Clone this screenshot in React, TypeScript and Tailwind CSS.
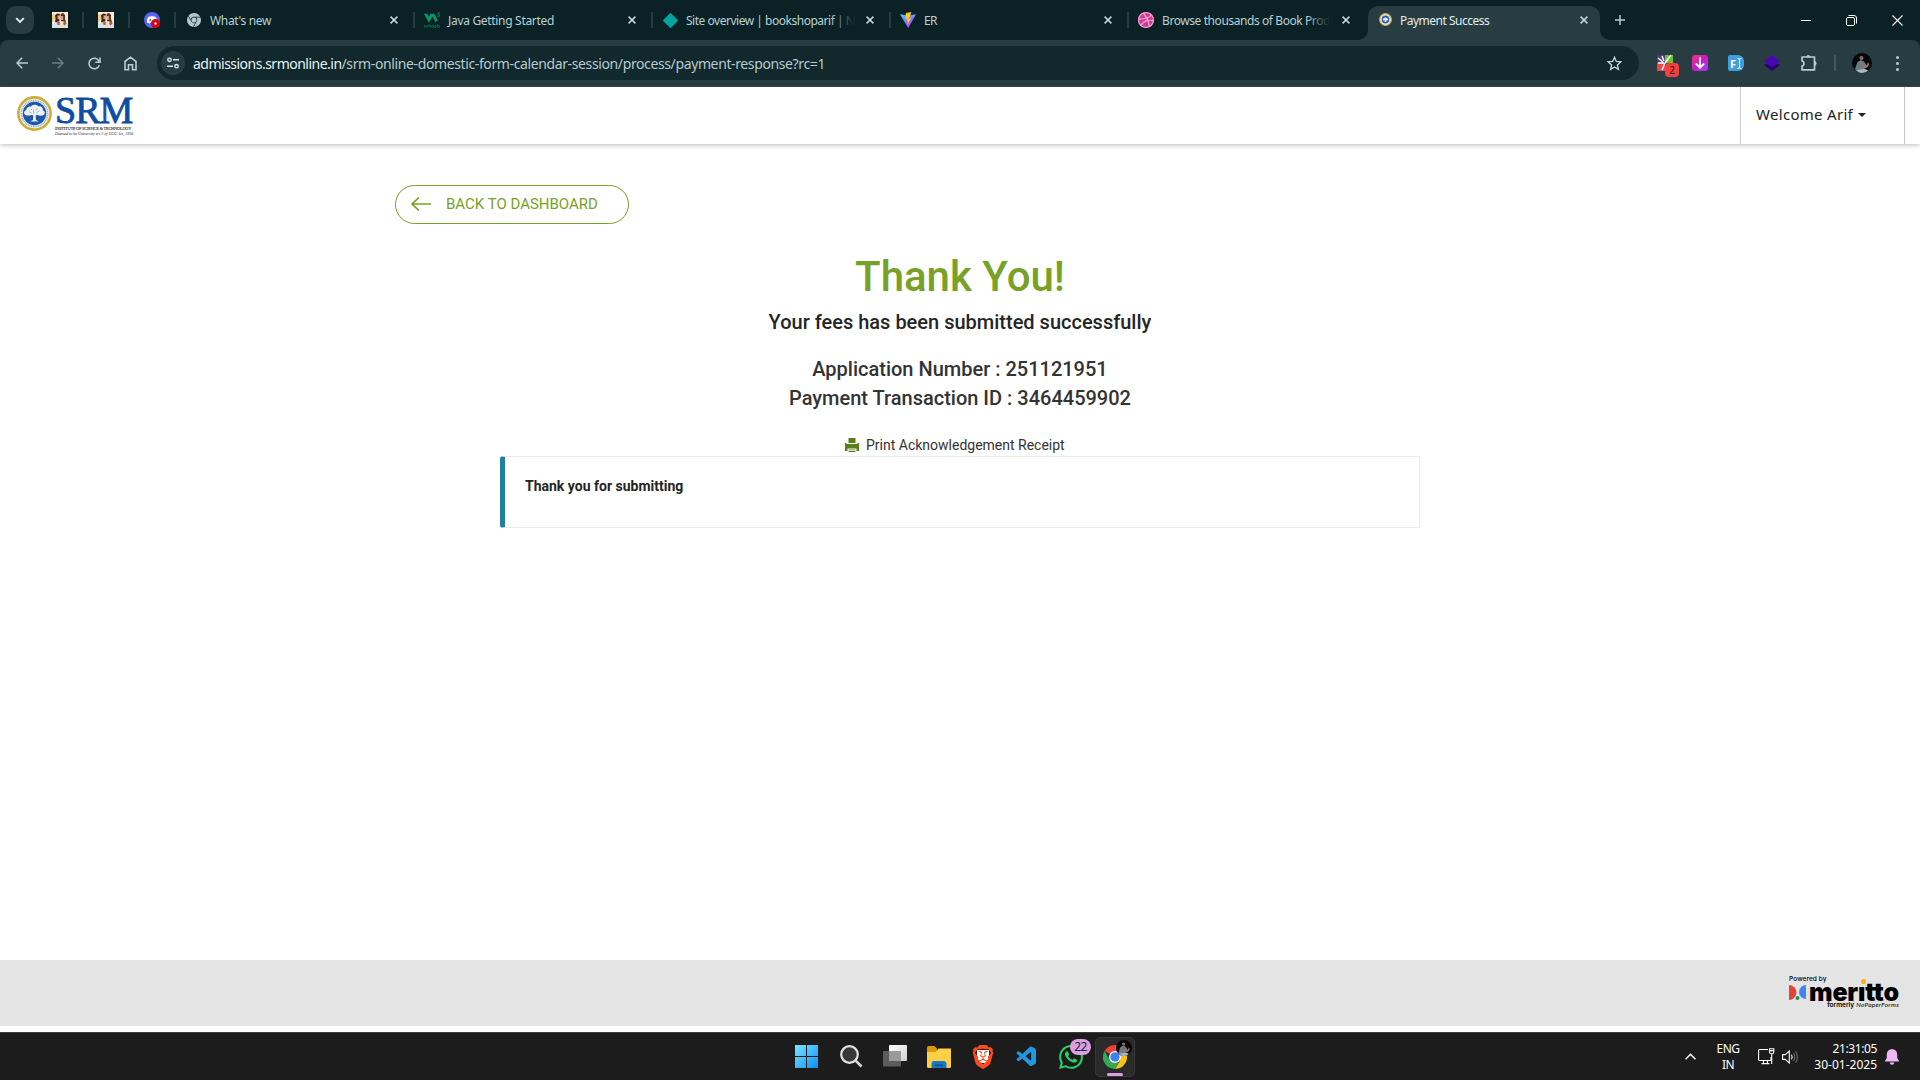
import { type ReactNode } from "react";
import { SiGooglechrome, SiW3Schools, SiDribbble, SiBrave, SiWhatsapp } from "react-icons/si";
import { VscVscode } from "react-icons/vsc";

function BookFavicon() {
  return (
    <svg width="16" height="16" viewBox="0 0 16 16">
      <rect width="16" height="16" fill="#f6ead8" />
      <path d="M0 3l3-1v5l-2 3-1 0z" fill="#f0c98e" />
      <path d="M3 3.500 5 1.500l3 .5-1 3 .5 4-2 1-1 2-1.500-2 .5-3z" fill="#4a2416" />
      <path d="M8.500 2l2.500-1 2 2v4l1 3-2.500 1L9 9z" fill="#59301f" />
      <path d="M5.500 3.500h2v3.500h-2z" fill="#dba17b" />
      <path d="M9 4h2.200v4H9z" fill="#d59a78" />
      <path d="M0 12l4-2 3 2v4H0z" fill="#d3e4ec" />
      <path d="M7 11l3-2 3 1 3 3v3H7z" fill="#efdccd" />
      <path d="M5 9l3 1-.5 3-2 0z" fill="#b8603b" />
      <path d="M11 11l3-2 .5 3-2.500 1.500z" fill="#8a6a5a" />
    </svg>
  );
}

function DiscordFavicon() {
  return (
    <svg width="16" height="16" viewBox="0 0 16 16">
      <circle cx="8" cy="8" r="8" fill="#5865f2" />
      <path d="M4 5.2C6 4 10 4 12 5.2 13 7 13.2 9 13 10.500l-2.500 1-1-1h-3l-1 1-2.500-1C2.800 9 3 7 4 5.200z" fill="#fff" />
      <circle cx="6.200" cy="8" r="1" fill="#5865f2" />
      <circle cx="11.500" cy="11.500" r="4.500" fill="#e0000b" />
      <circle cx="11.500" cy="11.500" r="1.200" fill="#fff" />
    </svg>
  );
}

function ViteFavicon() {
  return (
    <svg width="16" height="16" viewBox="0 0 16 16">
      <defs>
        <linearGradient id="v1" x1="0" y1="0" x2="0.7" y2="1">
          <stop offset="0" stopColor="#41d1ff" />
          <stop offset="1" stopColor="#bd34fe" />
        </linearGradient>
      </defs>
      <path d="M0 2.200 8.200 16 16 2.200 8 3.600z" fill="url(#v1)" />
      <path d="M11.500 0 5.900 1.100 5.500 7l1.900-.4-.6 2.700 1.200-.3-.8 4.200 3.900-6.900-2.200.4z" fill="#ffc41f" />
    </svg>
  );
}

function SealIcon({ size }: { size: number }) {
  return (
    <svg width={size} height={size} viewBox="0 0 36 36">
      <circle cx="18" cy="18" r="16.600" fill="#f3f4f2" stroke="#cfac33" strokeWidth="2.600" />
      <circle cx="18" cy="18" r="13.400" fill="none" stroke="#8fa8cc" strokeWidth="1.800" strokeDasharray="1 .8" />
      <circle cx="18" cy="18" r="12" fill="#1f57a6" />
      <path d="M8.500 19.500c-2-1.200-1.200-4.500 1-5 0-3 3-4.500 4.800-3.500 1.200-2.300 6.200-2.600 7.600-.3 3-.6 5.200 1.700 4.600 4 2.800 1 2.700 4.200.5 5-2.200 1-4.700.3-6.500-.5l-1.300 1 .3 4.500 3 1.500h-9l3-1.500.2-4.500-1.300-1c-2 1-4.900 1.200-6.900.3z" fill="#eef2f7" />
      <path d="M12 16l3 1.500M17 14l.5 4M23 15l-3 2.500M14 13l1.500 1.500M21 12.500l-1 2" stroke="#7d9dca" strokeWidth=".8" />
    </svg>
  );
}

function SealFavicon() {
  return (
    <svg width="13" height="13" viewBox="0 0 13 13">
      <circle cx="6.500" cy="6.500" r="5.800" fill="#f4f6f8" stroke="#d3b140" strokeWidth="1.200" />
      <circle cx="6.500" cy="6.500" r="3.900" fill="#2a5fc0" />
      <path d="M3.800 7.200c0-2 1.200-2.800 2.700-2.800s2.700.8 2.700 2.800l-2 .2.300 1.500H5.500l.3-1.500z" fill="#e6eefa" />
    </svg>
  );
}

function Avatar({ size }: { size: number }) {
  return (
    <svg width={size} height={size} viewBox="0 0 20 20">
      <defs>
        <clipPath id="av">
          <circle cx="10" cy="10" r="10" />
        </clipPath>
      </defs>
      <g clipPath="url(#av)">
        <rect width="20" height="20" fill="#060708" />
        <circle cx="9.500" cy="5" r="2" fill="#8d6b60" />
        <path d="M3 16l2.500-7 3.500-2 3 1.500 2 3 1 3-3 1.500-1 4H5z" fill="#6f7a83" />
        <path d="M9 8l1.500 5L15 12l1-3 1 2-1 3-6 1z" fill="#9a7567" />
        <path d="M5 17l7-1 4 1-2 3H7z" fill="#a9b8c8" />
      </g>
    </svg>
  );
}

function CloseGlyph() {
  return (
    <svg width="8" height="8" viewBox="0 0 8 8" fill="none" stroke="#c3d8db" strokeWidth="1.500">
      <path d="M.6.6l6.800 6.800M7.400.6.6 7.400" />
    </svg>
  );
}

function Fade() {
  return <div className="absolute inset-y-0 right-0 w-6 bg-linear-to-r from-transparent to-[#0a2226]" />;
}

function Tab({ icon, label, fade }: { icon: ReactNode; label: ReactNode; fade?: boolean }) {
  return (
    <div className="flex h-full w-[238px] items-center pl-[9px]">
      <span className="flex w-4 shrink-0 justify-center">{icon}</span>
      <div className="relative ml-2 w-[168px] whitespace-nowrap pt-[2px] text-[12px] text-[#b9d0d3]">
        {label}
        {fade && <Fade />}
      </div>
      <span className="ml-3">
        <CloseGlyph />
      </span>
      <span className="ml-auto h-4 w-[2px] bg-[#263c40]" />
    </div>
  );
}

function PinnedTab({ children }: { children: ReactNode }) {
  return (
    <div className="flex h-full w-[46px] items-center">
      <span className="ml-[8px] w-4">{children}</span>
      <span className="ml-[14px] h-4 w-[2px] bg-[#263c40]" />
    </div>
  );
}

function TabStrip() {
  return (
    <div className="flex h-10 items-center bg-[#0a2226]">
      <div className="ml-[6px] mr-[10px] flex size-7 items-center justify-center rounded-[10px] bg-[#283d41]">
        <svg width="10" height="7" viewBox="0 0 10 7" fill="none" stroke="#e3f0f2" strokeWidth="1.900">
          <path d="M1.200 1.200 5 5l3.800-3.800" />
        </svg>
      </div>
      <PinnedTab>
        <BookFavicon />
      </PinnedTab>
      <PinnedTab>
        <BookFavicon />
      </PinnedTab>
      <PinnedTab>
        <DiscordFavicon />
      </PinnedTab>
      <div className="-ml-[5px] flex h-full">
        <Tab
          icon={<SiGooglechrome size={14} color="#aec8cc" />}
          label={<span className="tracking-[-0.35px]">What's new</span>}
        />
        <Tab
          icon={<SiW3Schools size={16} color="#059862" />}
          label={<span className="tracking-[-0.31px]">Java Getting Started</span>}
        />
        <Tab
          icon={<span className="size-[11px] rotate-45 rounded-[1px] bg-[#05a3a0]" />}
          label={<span className="tracking-[-0.48px]">Site overview | bookshoparif | N</span>}
          fade
        />
        <Tab icon={<ViteFavicon />} label={<span className="tracking-[-0.57px]">ER</span>} />
        <div className="flex h-full w-[232px] items-center pl-[9px]">
          <span className="flex w-4 shrink-0 justify-center rounded-full bg-[#c2408f]">
            <SiDribbble size={16} color="#ff9ed8" />
          </span>
          <div className="relative ml-2 w-[168px] whitespace-nowrap pt-[2px] text-[12px] tracking-[-0.42px] text-[#b9d0d3]">
            Browse thousands of Book Prod
            <Fade />
          </div>
          <span className="ml-3">
            <CloseGlyph />
          </span>
        </div>
      </div>
      <svg className="-ml-[3px] self-end" width="10" height="10" viewBox="0 0 10 10">
        <path d="M10 0v10H0A10 10 0 0 0 10 0z" fill="#283d41" />
      </svg>
      <div className="flex h-[34px] w-[232px] items-center self-end rounded-t-[10px] bg-[#283d41] pb-[6px] pl-[11px]">
        <span className="-mt-[2px]">
          <SealFavicon />
        </span>
        <span className="ml-[8px] w-[180px] pt-[2px] text-[12px] tracking-[-0.5px] text-[#e0ecee]">
          Payment Success
        </span>
        <CloseGlyph />
      </div>
      <svg className="self-end" width="10" height="10" viewBox="0 0 10 10">
        <path d="M0 0v10h10A10 10 0 0 1 0 0z" fill="#283d41" />
      </svg>
      <svg className="ml-[5px]" width="10" height="10" viewBox="0 0 10 10" stroke="#b5cdd0" strokeWidth="1.500">
        <path d="M5 0v10M0 5h10" />
      </svg>
      <div className="ml-auto mr-[17px] flex items-center gap-[35px]">
        <span className="h-px w-[10px] bg-white" />
        <svg width="11" height="11" viewBox="0 0 11 11" fill="none" stroke="#fff">
          <rect x=".5" y="2.500" width="8" height="8" rx="1.500" />
          <path d="M2.500.5H8A2.500 2.500 0 0 1 10.500 3v5.500" />
        </svg>
        <svg width="11" height="11" viewBox="0 0 11 11" stroke="#fff" strokeWidth="1.100">
          <path d="M.5.5l10 10M10.500.5l-10 10" />
        </svg>
      </div>
    </div>
  );
}

function Toolbar() {
  return (
    <div className="flex h-[47px] items-center bg-[#0a2226]">
      <div className="flex h-full w-full items-center rounded-t-[8px] border-b border-[#3b4c50] bg-[#283d41]">
        <div className="ml-4 flex items-center">
          <svg width="12" height="12" viewBox="0 0 12 12" fill="none" stroke="#b9ced1" strokeWidth="1.500">
            <path d="M12 6H1M6.200.8 1 6l5.200 5.200" />
          </svg>
          <svg className="ml-6" width="12" height="12" viewBox="0 0 12 12" fill="none" stroke="#6b8084" strokeWidth="1.500">
            <path d="M0 6h11M5.800.8 11 6l-5.200 5.200" />
          </svg>
          <svg className="ml-6" width="13" height="13" viewBox="0 0 13 13" fill="none" stroke="#b9ced1" strokeWidth="1.500">
            <path d="M11.300 8.300a5.300 5.300 0 1 1-.4-4.500L11.700 5M12 .5v4.700H7.300" />
          </svg>
          <svg className="ml-[23px]" width="13" height="15" viewBox="0 0 13 15" fill="none" stroke="#b9ced1" strokeWidth="1.600">
            <path d="M1 13.800V5.500L6.500 1.200 12 5.500v8.300H8.500V8.700h-4v5.100z" />
          </svg>
        </div>
        <div className="ml-5 flex h-[34px] w-[1482px] items-center rounded-full bg-[#11282c]">
          <div className="ml-1 flex size-6 items-center justify-center rounded-full bg-[#283d41]">
            <svg width="12" height="12" viewBox="0 0 12 12" fill="none" stroke="#dbe9eb" strokeWidth="1.400">
              <circle cx="2.500" cy="2.800" r="1.700" />
              <path d="M6 2.800h6M0 9.200h6" />
              <circle cx="9.500" cy="9.200" r="1.700" />
            </svg>
          </div>
          <div className="ml-2 text-[14px] text-[#b5cbce]">
            <span className="tracking-[-0.51px] text-[#e6f4f6]">admissions.srmonline.in</span>
            <span className="tracking-[-0.38px]">
              /srm-online-domestic-form-calendar-session/process/payment-response?rc=1
            </span>
          </div>
          <svg className="ml-auto mr-[17px]" width="15" height="15" viewBox="0 0 15 15" fill="none" stroke="#c8dadc" strokeWidth="1.300">
            <path d="M7.500 1.300l1.800 4.200 4.500.4-3.400 3 1 4.500-3.900-2.400-3.900 2.400 1-4.500-3.400-3 4.500-.4z" />
          </svg>
        </div>
        <div className="ml-[17px] flex items-center">
          <div className="relative">
            <svg width="18" height="18" viewBox="0 0 18 18">
              <path d="M1 1h8v8H1z" fill="#4b3a8c" />
              <path d="M9 1h8v8H9z" fill="#6fbf2b" />
              <path d="M1 9h8v8H1z" fill="#ef4444" />
              <path d="M2 4l5 4M6 2l2 5M15 1l-6 8M9 9l-3 7M2 9h6" stroke="#fff" strokeWidth="1.500" />
            </svg>
            <div className="absolute left-[9px] top-[9px] flex h-[14px] w-[14px] items-center justify-center rounded-[4px] bg-[#f23f3f] text-[10px] leading-none text-[#2a1012]">
              2
            </div>
          </div>
          <div className="ml-[18px] flex size-4 items-center justify-center rounded-[3px] bg-linear-to-br from-[#ef2d78] via-[#c815c9] to-[#a238ff]">
            <svg width="10" height="12" viewBox="0 0 10 12" fill="none" stroke="#fff" strokeWidth="1.800">
              <path d="M5 .5V11M.8 6.500 5 10.700l4.200-4.200" />
            </svg>
          </div>
          <div className="ml-5 flex h-4 w-4 items-center justify-center rounded-l-[2px] rounded-r-[6px] bg-[#3f9fe0] text-[11px] font-bold leading-none text-white">
            F
            <svg className="ml-px" width="5" height="11" viewBox="0 0 5 11" fill="none" stroke="#fff">
              <path d="M2.500 1v9M.5.500 2.500 1 4.500.5M.5 10.500l2-.5 2 .5" />
            </svg>
          </div>
          <svg className="ml-5" width="16" height="16" viewBox="0 0 16 16">
            <path d="M0 10l8-4 8 4-8 6z" fill="#23066b" />
            <path d="M8 0l8 6.300-8 6.200-8-6.200z" fill="#4a06b5" />
          </svg>
          <svg className="ml-[20px]" width="18" height="18" viewBox="0 0 18 18" fill="none" stroke="#b9ced1" strokeWidth="1.700">
            <path d="M2 3h12.500v12.800H2V12c2.600-.3 2.600-4.700 0-5z" strokeLinejoin="round" />
            <path d="M6.500 2.600a2 2 0 0 1 3.600 0zM15 7.600a2 2 0 0 1 0 3.600z" fill="#b9ced1" strokeWidth="1" />
          </svg>
          <span className="ml-[16px] mr-[16px] h-4 w-[2px] bg-[#41585c]" />
          <Avatar size={20} />
          <span className="ml-[24px] flex flex-col gap-[3px]">
            <i className="size-[3px] rounded-full bg-[#b9ced1]" />
            <i className="size-[3px] rounded-full bg-[#b9ced1]" />
            <i className="size-[3px] rounded-full bg-[#b9ced1]" />
          </span>
        </div>
      </div>
    </div>
  );
}

function SiteHeader() {
  return (
    <header className="relative z-10 flex h-[57px] justify-between bg-white pl-[17px] pr-[15px] shadow-[0_1px_5px_rgba(0,0,0,0.28)]">
      <div className="flex pt-[9px]">
        <SealIcon size={35} />
        <div className="ml-[3px] w-[78px] font-['Liberation_Serif'] text-[#0f4da2]">
          <div className="h-[30px] text-[38px] leading-[29px] tracking-[-1px] [-webkit-text-stroke:0.8px_#0f4da2]">SRM</div>
          <div className="whitespace-nowrap text-[4.5px] leading-[5px] tracking-[-0.3px] text-[#333] [-webkit-text-stroke:0.1px_#333]">
            INSTITUTE OF SCIENCE &amp; TECHNOLOGY
          </div>
          <div className="whitespace-nowrap text-[4px] italic leading-[5px] text-[#222]">
            Deemed to be University u/s 3 of UGC Act, 1956
          </div>
        </div>
      </div>
      <div className="flex h-full w-[165px] items-center border-x border-[#c8c8c8] pb-[2px] pl-[15px] font-['Noto_Sans'] text-[15px] text-[#222]">
        <span className="tracking-[0.3px]">Welcome Arif</span>
        <span className="ml-[5px] border-x-4 border-t-4 border-x-transparent border-t-[#222]" />
      </div>
    </header>
  );
}

function Content() {
  return (
    <main className="flex h-[816px] flex-col bg-white pt-[41px] font-['Roboto'] text-[#252525]">
      <div className="ml-[395px] flex h-[39px] w-[234px] items-center rounded-full border border-[#7a9f22] pb-px pl-[15px] text-[15px] text-[#79a127]">
        <svg className="-mt-px" width="20" height="14" viewBox="0 0 20 14" fill="none" stroke="#79a127" strokeWidth="1.700">
          <path d="M20 7H1M8 .5 1 7l7 6.500" />
        </svg>
        <span className="ml-[15px]">BACK TO DASHBOARD</span>
      </div>
      <h1 className="mt-[25px] text-center text-[42px] font-medium leading-[56px] text-[#79a127]">Thank You!</h1>
      <p className="mt-[3px] text-center text-[20px] font-medium leading-[28px]">
        Your fees has been submitted successfully
      </p>
      <div className="mt-[19px] text-center text-[20px] font-medium leading-[29px] text-[#333]">
        <p>Application Number : 251121951</p>
        <p>Payment Transaction ID : 3464459902</p>
      </div>
      <div className="mt-[22px] flex h-[20px] items-center pl-[845px] text-[14px] text-[#333]">
        <svg className="-mt-px" width="14" height="14" viewBox="0 0 14 14" fill="#5b7f1c">
          <path d="M3.500 0h7v5h-7zM0 5h1.500v1h11V5H14v8h-2.500v-2.500h-9V13H0zM3.500 11.500h7v.8h-7zM3.500 13h7v1h-7z" />
        </svg>
        <span className="ml-[7px]">Print Acknowledgement Receipt</span>
      </div>
      <div className="mx-auto mt-px h-[72px] w-[920px] rounded-[3px] border border-l-[5px] border-[#eaeaea] border-l-[#1d819c] pl-5 pt-[19px] text-[14px] font-bold leading-5">
        Thank you for submitting
      </div>
    </main>
  );
}

function Footer() {
  return (
    <footer className="border-b-[6px] border-white">
      <div className="flex h-[66px] justify-end bg-[#e4e4e4] pr-[20px] pt-[15px]">
        <div className="w-[111px] text-black">
          <div className="h-[8px] whitespace-nowrap font-['Inter'] text-[6.5px] font-medium leading-[8px] tracking-[0.1px]">
            Powered by
          </div>
          <div className="flex h-[18px]">
            <svg className="mt-[2px]" width="18" height="16" viewBox="0 0 18 16">
              <path d="M0 0a7.500 7.500 0 0 1 0 15z" fill="#e0443a" />
              <path d="M17 0v14A7 7 0 0 1 17 0z" fill="#4285f4" />
              <circle cx="8.500" cy="13" r="2" fill="#0f9d58" />
            </svg>
            <div className="relative ml-[2px] font-['Inter'] text-[25px] font-black leading-[18px] tracking-[-0.2px]">
              merıtto
              <i className="absolute left-[52px] top-[-4px] size-[5px] rounded-full bg-[#f9b208]" />
            </div>
          </div>
          <div className="flex justify-end gap-[2px] whitespace-nowrap pr-px text-[6.5px] font-semibold leading-[8px]">
            <span className="font-['Inter']">formerly</span>
            <span className="font-['Lato'] font-normal italic tracking-[0.26px]">NoPaperForms</span>
          </div>
        </div>
      </div>
    </footer>
  );
}

function ChromeLogo() {
  return (
    <svg width="24" height="24" viewBox="0 0 24 24">
      <path d="M12 12 1.600 6A12 12 0 0 1 22.400 6L12 6z" fill="#ea4335" />
      <path d="M12 6h10.400A12 12 0 0 1 12 24l5.200-9z" fill="#fbc116" />
      <path d="M1.600 6 6.800 15 12 18h3.460L12 24A12 12 0 0 1 1.600 6z" fill="#34a853" />
      <circle cx="12" cy="12" r="6" fill="#fff" />
      <circle cx="12" cy="12" r="4.700" fill="#3b82f0" />
    </svg>
  );
}

function Taskbar() {
  return (
    <div className="flex h-12 items-center border-t border-[#3c3c3c] bg-[#1c1c1c]">
      <div className="ml-[795px] flex items-center">
        <svg width="23" height="23" viewBox="0 0 23 23">
          <defs>
            <linearGradient id="win" x1="0" y1="0" x2="1" y2="1">
              <stop offset="0" stopColor="#7de3ff" />
              <stop offset="1" stopColor="#0c8ff5" />
            </linearGradient>
          </defs>
          <path d="M0 0h11v11H0zM12 0h11v11H12zM0 12h11v11H0zM12 12h11v11H12z" fill="url(#win)" />
        </svg>
        <svg className="ml-[22px]" width="23" height="23" viewBox="0 0 23 23" fill="none">
          <circle cx="9.500" cy="9.500" r="8.300" fill="#383838" stroke="#e2e2e2" strokeWidth="2.200" />
          <path d="M15.500 15.500l6 6" stroke="#d5d5d5" strokeWidth="2.600" />
        </svg>
        <svg className="ml-[20px]" width="24" height="23" viewBox="0 0 24 23">
          <defs>
            <linearGradient id="tv" x1="0" y1="0" x2="1" y2="1">
              <stop offset="0" stopColor="#fff" />
              <stop offset="1" stopColor="#d0d0d0" />
            </linearGradient>
          </defs>
          <rect x="6" y="0" width="18" height="16" rx="1" fill="url(#tv)" />
          <path d="M0 6h18v15.500H0z" fill="#5c5c5c" />
          <path d="M6 6h12v10H6z" fill="#9a9a9a" />
        </svg>
        <svg className="ml-[20px]" width="24" height="22" viewBox="0 0 24 22">
          <path d="M0 1.500Q0 0 1.500 0h6l2.500 2.500V7H0z" fill="#d99a0b" />
          <path d="M0 6h9l2.500-3.500H24V20.500Q24 22 22.500 22h-21Q0 22 0 20.500z" fill="#ffcf45" />
          <path d="M4.500 22v-4Q4.500 15 7.500 15h9q3 0 3 3v4z" fill="#1976c9" />
          <path d="M8 18.500h8v1.800H8z" fill="#0c549a" />
        </svg>
        <div className="relative ml-[20px] size-6">
          <span className="absolute left-[6px] top-[5px] h-[13px] w-3 bg-white" />
          <SiBrave className="relative" size={24} color="#fb4a22" />
        </div>
        <VscVscode className="ml-[20px]" size={24} color="#2196e3" />
        <div className="relative ml-[20px]">
          <SiWhatsapp size={24} color="#25d366" />
          <div className="absolute left-[11px] top-[-6px] flex h-4 w-[21px] items-center justify-center rounded-full bg-[#dc9fe4] text-[12px] tracking-[-0.5px] text-[#1c1c1c]">
            22
          </div>
        </div>
        <div className="relative ml-[12px] flex h-10 w-10 items-center justify-center rounded-[5px] border border-[#383838] bg-[#2a2a2a]">
          <ChromeLogo />
          <div className="absolute left-[20px] top-[2px]">
            <Avatar size={16} />
          </div>
          <span className="absolute bottom-0 left-[11px] h-[3px] w-4 rounded-full bg-[#dc9fe4]" />
        </div>
      </div>
      <div className="ml-auto mr-[21px] flex items-center text-[12px] leading-4 text-white">
        <svg width="11" height="7" viewBox="0 0 11 7" fill="none" stroke="#fff" strokeWidth="1.500">
          <path d="M.6 6.200 5.500 1.200l4.900 5" />
        </svg>
        <div className="ml-[20px] w-[24px] pt-px text-center tracking-[-0.5px]">
          <div>ENG</div>
          <div>IN</div>
        </div>
        <svg className="ml-[18px]" width="17" height="17" viewBox="0 0 17 17" fill="none" stroke="#fff" strokeWidth="1.100">
          <path d="M10 1.500H1.500Q.6 1.500.6 2.500v9Q.6 12.500 1.500 12.500H13V9M5.500 12.500v3M9.500 12.500v3M3.500 15.600h8" />
          <path d="M11.500.8h4.300v3.500q0 1.500-2.100 1.500t-2.200-1.500zM11.500 2.600h4.300M13.700 6v10" />
        </svg>
        <svg className="ml-[7px]" width="17" height="14" viewBox="0 0 17 14" fill="none" stroke="#fff" strokeWidth="1.100">
          <path d="M.6 4.600h2.600L7.300 1v12L3.200 9.400H.6z" />
          <path d="M9.500 4.800q1.400 2.200 0 4.400" />
          <path d="M11.500 3q2.500 4 0 8M13.600 1.300q3.600 5.700 0 11.400" stroke="#6a6a6a" />
        </svg>
        <div className="ml-[15px] flex w-[63px] flex-col items-end">
          <span className="tracking-[-0.4px]">21:31:05</span>
          <span>30-01-2025</span>
        </div>
        <svg className="ml-[8px]" width="14" height="16" viewBox="0 0 14 16" fill="#efb8f3">
          <path d="M7 0a5.200 5.200 0 0 1 5.200 5.200V9L14 12v.6H0V12l1.800-3V5.200A5.200 5.200 0 0 1 7 0zM4.800 13.600h4.400a2.200 2.200 0 0 1-4.400 0z" />
        </svg>
      </div>
    </div>
  );
}

export default function App() {
  return (
    <div className="h-[1080px] w-[1920px] overflow-hidden bg-white font-['Noto_Sans']">
      <TabStrip />
      <Toolbar />
      <SiteHeader />
      <Content />
      <Footer />
      <Taskbar />
    </div>
  );
}
